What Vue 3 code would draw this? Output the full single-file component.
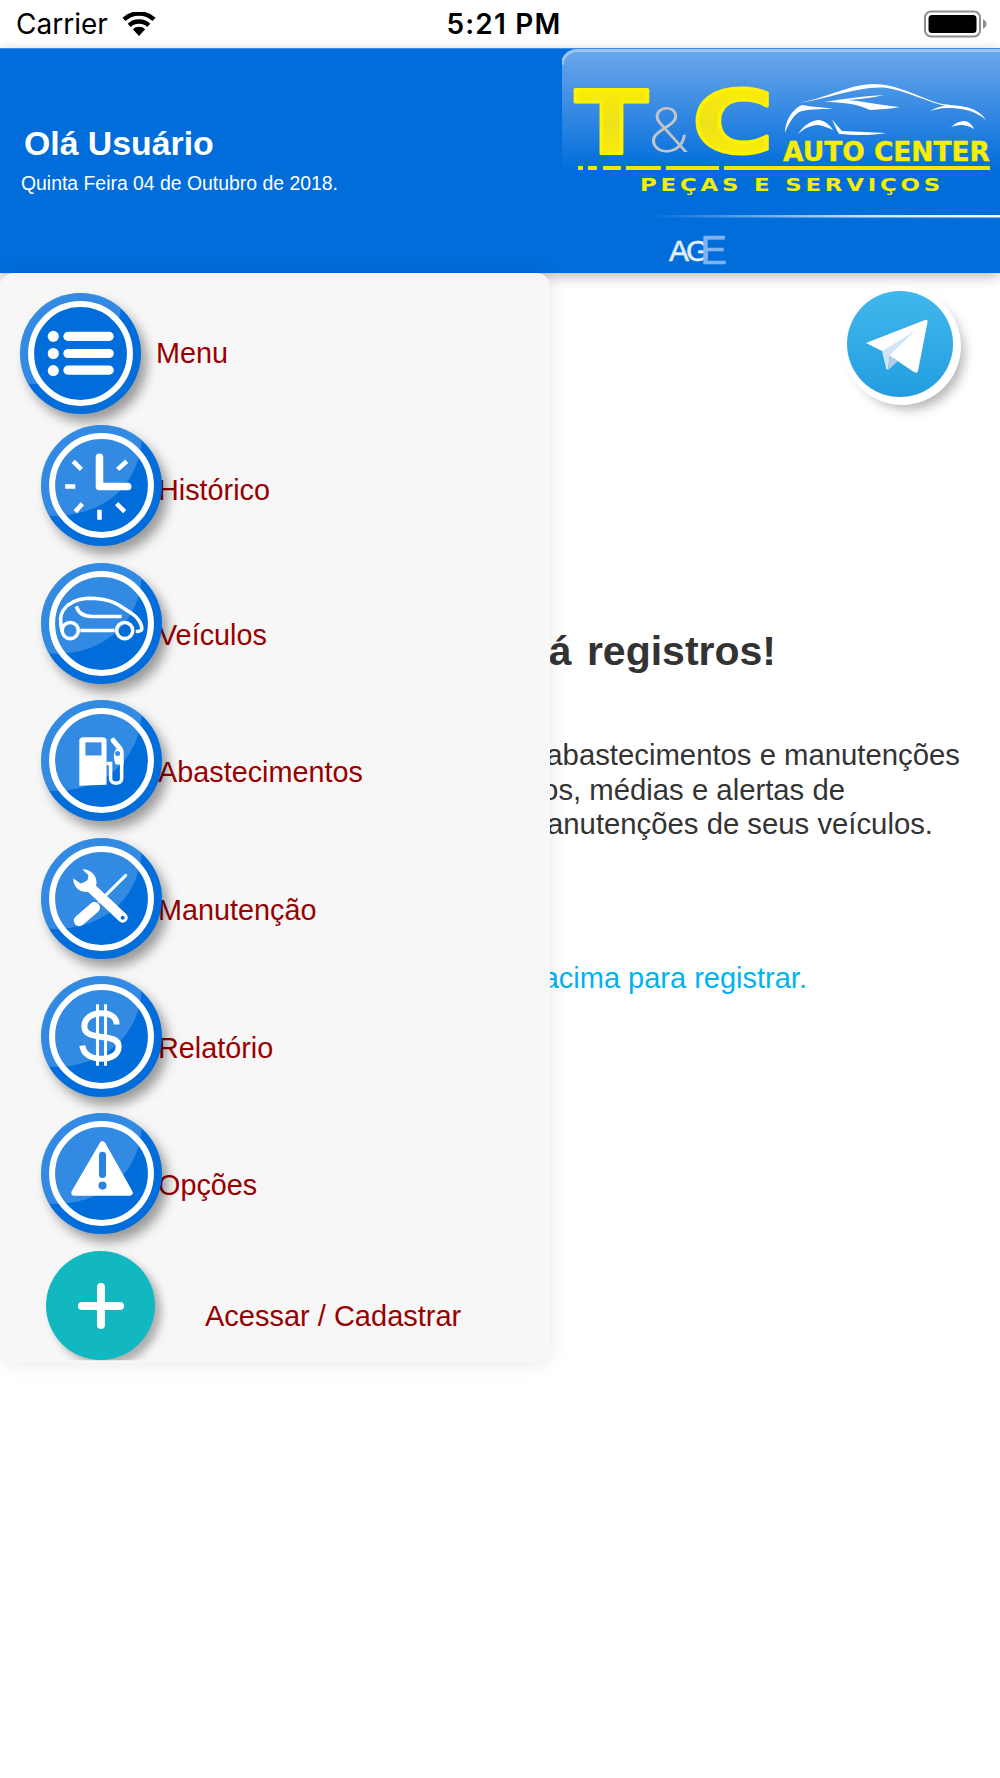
<script setup>
const items = [
  { label: 'Histórico', icon: 'clock', drop: 'drop-s' },
  { label: 'Veículos', icon: 'car', drop: 'drop-m' },
  { label: 'Abastecimentos', icon: 'fuel', drop: 'drop-m' },
  { label: 'Manutenção', icon: 'tools', drop: 'drop-m' },
  { label: 'Relatório', icon: 'dollar', drop: 'drop-m' },
  { label: 'Opções', icon: 'alert', drop: 'drop-m' },
]
</script>

<template>
  <div class="page">
    <div class="status">
      <div class="status-left">
        <span class="carrier">Carrier</span>
        <svg class="wifi" viewBox="0 0 34 24" width="34" height="24">
          <path d="M17 24 10.800 17.200a9 9 0 0 1 12.400 0Z" fill="#000" />
          <path d="M7.200 13.400a14.500 14.500 0 0 1 19.600 0" fill="none" stroke="#000" stroke-width="4.500" />
          <path d="M2 7.400a22 22 0 0 1 30 0" fill="none" stroke="#000" stroke-width="4.500" />
        </svg>
      </div>
      <span class="time">5:21 PM</span>
      <svg class="battery" viewBox="0 0 64 28" width="64" height="28">
        <rect x="1" y="1.500" width="55" height="25" rx="6" fill="none" stroke="#8e8e8e" stroke-width="2" />
        <rect x="4.500" y="5" width="48" height="18" rx="3.500" fill="#000" />
        <path d="M59 9.500c2.500.5 3.500 2.500 3.500 4.500s-1 4-3.500 4.500Z" fill="#8e8e8e" />
      </svg>
    </div>

    <header class="header">
      <div class="greeting">
        <h1 class="hello">Olá Usuário</h1>
        <p class="date">Quinta Feira 04 de Outubro de 2018.</p>
      </div>
      <svg class="logo" viewBox="0 0 438 225" width="438" height="225">
        <defs>
          <linearGradient id="logoBg" x1="0" y1="0" x2="0" y2="1">
            <stop offset="0" stop-color="#6ba6ea" />
            <stop offset="1" stop-color="#006ddb" />
          </linearGradient>
          <linearGradient id="rule" x1="0" y1="0" x2="1" y2="0">
            <stop offset="0" stop-color="#fff" stop-opacity="0" />
            <stop offset="0.6" stop-color="#fff" stop-opacity="0.8" />
            <stop offset="1" stop-color="#fff" />
          </linearGradient>
          <linearGradient id="yellow" x1="0" y1="0" x2="0" y2="1">
            <stop offset="0" stop-color="#fff200" />
            <stop offset="0.5" stop-color="#eee11a" />
            <stop offset="1" stop-color="#fff200" />
          </linearGradient>
        </defs>
        <path d="M0 122V16A15 15 0 0 1 15 2H438V122Z" fill="url(#logoBg)" />
        <path d="M0 16A15 15 0 0 1 15 1.500H438" fill="none" stroke="#9cc4f2" stroke-width="3" />

        <text x="13" y="103.500" class="big" textLength="73" lengthAdjust="spacingAndGlyphs">T</text>
        <text x="86" y="103" class="amp" textLength="41" lengthAdjust="spacingAndGlyphs">&amp;</text>
        <text x="130" y="103.500" class="big" textLength="82" lengthAdjust="spacingAndGlyphs">C</text>

        <g fill="#fff">
          <path d="M236 54C262 50 285 36 310 35C335 35 352 46 376 54C392 58 413 54 424 71C412 61 400 59 384 59C378 59 372 61 368 62C373 59 378 57 384 57C365 53 345 42 325 39C298 36 268 50 236 54Z" />
          <path d="M262 53C280 50 305 47 322 46C310 49 298 50 286 51C300 52 318 56 338 58C328 60 318 60 308 61C296 55 280 53 262 53Z" />
          <path d="M223 84C223 72 230 60 240 56C250 58 260 58 271 60C258 60 245 60 237 63C230 68 226 76 223 84Z" />
          <path d="M236 85C242 76 250 71 257 71C263 72 268 76 271 81C265 78 259 76 254 76C247 77 241 80 236 85Z" />
          <path d="M270 70C273 74 277 79 280 82C295 83 310 83 324 84C308 87 290 86 277 85C274 80 272 75 270 70Z" />
          <path d="M389 78C393 74 398 72 402 72C406 72 410 75 412 80C407 77 403 76 399 76C395 76 392 77 389 78Z" />
        </g>

        <text x="221" y="112" class="auto" textLength="207" lengthAdjust="spacingAndGlyphs">AUTO CENTER</text>
        <path d="M16 119h5M26 119h9M41 119h18M64 119h35M104 119h53M162 119h266" stroke="#f0e800" stroke-width="4" fill="none" />
        <text x="78" y="142" class="parts" textLength="304" lengthAdjust="spacingAndGlyphs">PEÇAS E SERVIÇOS</text>
        <rect x="88" y="166" width="350" height="2.500" fill="url(#rule)" />
        <text x="107" y="212" class="age">AG<tspan class="age-e" dx="-6" dy="3">E</tspan></text>
      </svg>
    </header>

    <main class="main">
      <div class="telegram">
        <svg viewBox="0 0 106 106" width="106" height="106">
          <defs>
            <linearGradient id="tg" x1="0" y1="0" x2="0" y2="1">
              <stop offset="0" stop-color="#41b8ec" />
              <stop offset="1" stop-color="#229ddf" />
            </linearGradient>
          </defs>
          <circle cx="53" cy="53" r="53" fill="url(#tg)" />
          <path d="M19 52 78 29Q81 28 80.500 31L71 80Q70 83 67 81L43 65 35 60Z" fill="#fff" />
          <path d="M35 60 68 40 43 64 41 78Q40 80 39 77Z" fill="#d2e5f5" />
          <path d="M43 65 41 79 51 70Z" fill="#b5cfe6" />
        </svg>
      </div>
      <h2 class="empty-title">Não há registros!</h2>
      <p class="empty-text">
        <span class="line line-1">Registre abastecimentos e manutenções</span>
        <span class="line line-2">para ver gastos, médias e alertas de</span>
        <span class="line line-3">manutenções de seus veículos.</span>
      </p>
      <p class="empty-hint">Use o botão acima para registrar.</p>
    </main>

    <nav class="drawer">
      <div class="row row-menu">
        <span class="disc disc-flat">
          <svg viewBox="0 0 120 120" width="121" height="121">
            <path d="M100 15A60 60 0 0 0 8 90C50 92 95 70 100 15Z" fill="#fff" opacity="0.2" />
            <circle cx="60" cy="60" r="47" fill="#006ddb" />
            <circle cx="60" cy="60" r="49" fill="none" stroke="#fff" stroke-width="6" />
            <g fill="#fff">
              <circle cx="33" cy="43" r="5.500" />
              <circle cx="33" cy="60" r="5.500" />
              <circle cx="33" cy="77" r="5.500" />
              <rect x="43" y="38.500" width="50" height="9" rx="4.500" />
              <rect x="43" y="55.500" width="50" height="9" rx="4.500" />
              <rect x="43" y="72" width="50" height="9" rx="4.500" />
            </g>
          </svg>
        </span>
        <span class="label">Menu</span>
      </div>

      <div v-for="item in items" :key="item.label" class="row">
        <span class="disc">
          <svg viewBox="0 0 120 120" width="121" height="121">
            <path d="M100 15A60 60 0 0 0 8 90C50 92 95 70 100 15Z" fill="#fff" opacity="0.2" />
            <circle cx="60" cy="60" r="49" fill="none" stroke="#fff" stroke-width="6" />

            <g v-if="item.icon === 'clock'">
              <path d="M58 32V61H86" fill="none" stroke="#fff" stroke-width="7.500" stroke-linecap="round" stroke-linejoin="round" />
              <path d="M58 84V94M24 61H34M32 36 40 44M85 36 76 44M34 86 41 78M75 78 83 86" stroke="#fff" stroke-width="4.500" fill="none" />
            </g>

            <g v-else-if="item.icon === 'car'" fill="none" stroke="#fff" stroke-width="3.500">
              <path d="M21 68C19 60 18 53 22 47C26 41 32 36 46 35C58 35 66 36 74 40C80 43 85 47 90 50C95 53 100 60 100 65C100 68 97 68 94 68" />
              <path d="M39 67H73" />
              <circle cx="29" cy="67" r="8" />
              <circle cx="83" cy="67" r="8" />
              <path d="M35 43C37 49 42 53 50 53H80" />
            </g>

            <g v-else-if="item.icon === 'fuel'">
              <path d="M38 40C38 38 40 37 42 37H61C63 37 65 38 65 40V84L38 85Z" fill="#fff" />
              <rect x="44" y="42" width="16" height="13" fill="#3a8ce4" />
              <path d="M65 63H69V78C69 84 80 84 80 78V60" fill="none" stroke="#fff" stroke-width="3.500" />
              <path d="M69 39 72 37 80 46C82 49 82 51 82 54V64H74C72 58 71 53 75 48L69 41Z" fill="#fff" />
              <circle cx="76" cy="53" r="2.500" fill="#3a8ce4" />
            </g>

            <g v-else-if="item.icon === 'tools'">
              <path d="M38 82 53 69" stroke="#fff" stroke-width="11" stroke-linecap="round" />
              <path d="M58 63 84 37" stroke="#fff" stroke-width="3" stroke-linecap="round" />
              <path d="M47 47 81 79" stroke="#fff" stroke-width="10" stroke-linecap="round" />
              <path d="M41 31L47 37 46 43 39 45 32 40C32 50 40 55 47 53L55 46C56 38 50 31 41 31Z" fill="#fff" />
              <circle cx="81" cy="79" r="2" fill="#006ddb" />
            </g>

            <g v-else-if="item.icon === 'dollar'">
              <path d="M75 48C75 41 69 37 60 37 50 37 43 42 43 50 43 66 77 55 77 70 77 78 70 82 59 82 49 82 42 77 41 69" fill="none" stroke="#fff" stroke-width="6" />
              <path d="M56 28V89M64 28V89" stroke="#fff" stroke-width="3" fill="none" />
            </g>

            <g v-else-if="item.icon === 'alert'">
              <path d="M61 31 88 79H33Z" fill="#fff" stroke="#fff" stroke-width="6" stroke-linejoin="round" />
              <path d="M61 42V61" stroke="#2a82e2" stroke-width="7" stroke-linecap="round" />
              <circle cx="61" cy="72" r="4" fill="#2a82e2" />
            </g>
          </svg>
        </span>
        <span class="label" :class="item.drop">{{ item.label }}</span>
      </div>

      <div class="row-add">
        <span class="add">
          <svg viewBox="0 0 46 46" width="46" height="46">
            <path d="M23 4V42M4 23H42" stroke="#fff" stroke-width="8" stroke-linecap="round" />
          </svg>
        </span>
        <span class="add-label">Acessar / Cadastrar</span>
      </div>
    </nav>
  </div>
</template>

<style>
html,
body {
  margin: 0;
  background: #fff;
}
</style>

<style scoped>
.page {
  position: relative;
  width: 1000px;
  height: 1778px;
  overflow: hidden;
  background: #fff;
  font-family: "Liberation Sans", Arial, sans-serif;
}

.status {
  height: 48px;
  padding: 0 12px 0 16px;
  box-sizing: border-box;
  display: grid;
  grid-template-columns: 1fr auto 1fr;
  align-items: center;
  background: #fff;
}

.status-left {
  display: flex;
  align-items: center;
  gap: 14px;
}

.carrier {
  font-family: Inter, "Liberation Sans", sans-serif;
  font-size: 28px;
  color: #000;
}

.wifi {
  flex: none;
}

.time {
  margin-left: 4px;
  font-family: Inter, "Liberation Sans", sans-serif;
  font-weight: 600;
  font-size: 28px;
  letter-spacing: 1.200px;
  color: #000;
}

.battery {
  justify-self: end;
}

.header {
  height: 225px;
  display: flex;
  justify-content: space-between;
  background: #006ddb;
  border-top: 1px solid #3a8ce4;
  box-sizing: border-box;
  box-shadow: 0 4px 12px rgba(0, 0, 0, 0.25);
  position: relative;
}

.greeting {
  padding-top: 74px;
  color: #fff;
}

.hello {
  margin: 0 0 8px 24px;
  font-size: 33.800px;
  line-height: 40px;
  font-weight: 700;
}

.date {
  margin: 0 0 0 21px;
  font-size: 19.400px;
  line-height: 24px;
}

.big {
  font-family: "DejaVu Sans", sans-serif;
  font-weight: 700;
  font-size: 87px;
  fill: url(#yellow);
  stroke: #fff200;
  stroke-width: 3;
  stroke-linejoin: round;
}

.amp {
  font-family: Inter, "Liberation Sans", sans-serif;
  font-weight: 200;
  font-size: 62px;
  fill: #c4c4c4;
}

.auto {
  font-family: "DejaVu Sans", sans-serif;
  font-weight: 700;
  font-size: 27px;
  fill: #f7ee00;
  stroke: #f7ee00;
  stroke-width: 0.4;
}

.parts {
  font-family: "DejaVu Sans", sans-serif;
  font-weight: 700;
  font-size: 18px;
  letter-spacing: 3px;
  fill: #f7ee00;
}

.age {
  font-family: "Liberation Sans", sans-serif;
  font-size: 30px;
  letter-spacing: -3px;
  fill: #e4eefb;
  stroke: #e4eefb;
  stroke-width: 0.5;
}

.age-e {
  font-size: 40px;
  fill: #7fb2ee;
  stroke: #7fb2ee;
}

.main {
  position: relative;
  padding-top: 11px;
}

.telegram {
  width: 106px;
  height: 106px;
  margin: 7px 0 0 847px;
  border-radius: 50%;
  box-shadow: 2px 2px 0 6px #fff, 9px 10px 12px 2px rgba(0, 0, 0, 0.3);
}

.telegram svg {
  display: block;
}

.empty-title {
  margin: 232px 224px 0 0;
  text-align: right;
  font-size: 41px;
  line-height: 44px;
  font-weight: 700;
  word-spacing: 4px;
  color: #333;
}

.empty-text {
  margin: 65px 0 0;
  font-size: 29.300px;
  line-height: 34.500px;
  color: #333;
}

.line {
  display: block;
  text-align: right;
}

.line-1 {
  margin-right: 40px;
}

.line-2 {
  margin-right: 155px;
}

.line-3 {
  margin-right: 67px;
}

.empty-hint {
  margin: 119px 193px 0 0;
  text-align: right;
  font-size: 29px;
  line-height: 34px;
  color: #00b3ef;
}

.drawer {
  position: absolute;
  left: 0;
  top: 273px;
  width: 550px;
  height: 1090px;
  box-sizing: border-box;
  padding: 20px 0 0 41px;
  background: #f7f7f7;
  border-radius: 14px;
  box-shadow: 0 0 20px rgba(0, 0, 0, 0.1);
}

.row {
  display: flex;
  height: 137.700px;
  align-items: flex-start;
}

.row-menu {
  margin-left: -21px;
  height: 132px;
}

.disc {
  position: relative;
  z-index: 1;
  flex: none;
  width: 121px;
  height: 121px;
  margin-right: -4px;
  border-radius: 50%;
  background: #006ddb;
  box-shadow: 6px 8px 12px rgba(0, 0, 0, 0.38);
  overflow: hidden;
}

.disc svg {
  display: block;
}

.disc-flat {
  margin-right: 15px;
}

.label {
  font-size: 28.800px;
  line-height: 34px;
  margin-top: 43px;
  color: #990000;
  white-space: nowrap;
}

.drop-s {
  margin-top: 48px;
}

.drop-m {
  margin-top: 55px;
}

.row-add {
  display: flex;
  margin-left: 5px;
}

.add {
  flex: none;
  width: 109px;
  height: 109px;
  display: flex;
  align-items: center;
  justify-content: center;
  border-radius: 50%;
  background: #12b8c0;
  box-shadow: 6px 6px 9px rgba(0, 0, 0, 0.3);
  clip-path: inset(-20px -20px 0 -20px);
}

.add-label {
  margin: 48px 0 0 50px;
  font-size: 29px;
  line-height: 34px;
  color: #990000;
}
</style>
